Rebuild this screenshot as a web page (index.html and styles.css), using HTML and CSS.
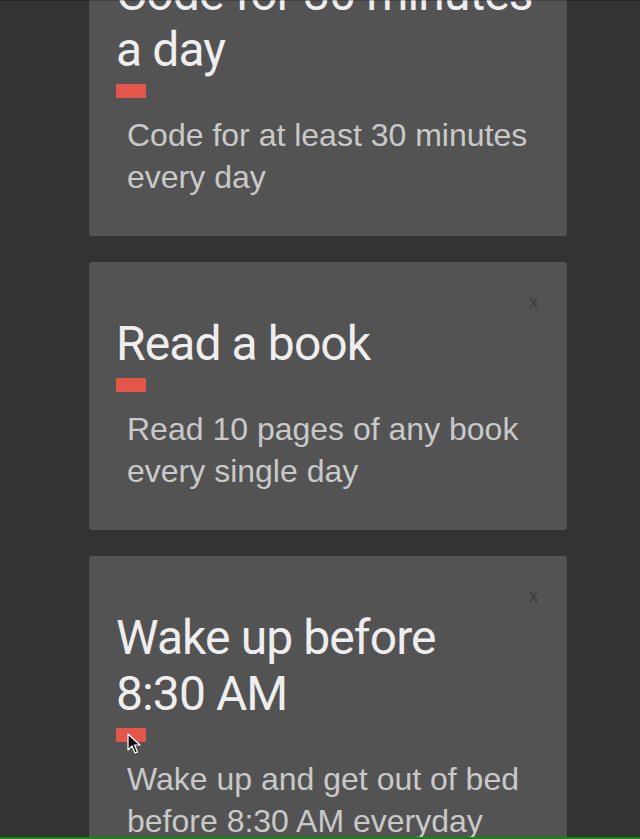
FILE: index.html
```html
<!DOCTYPE html>
<html lang="en">
<head>
<meta charset="utf-8">
<title>Habits</title>
<link rel="stylesheet" href="styles.css">
</head>
<body>
<main class="list">
  <article class="card">
    <button class="close">x</button>
    <h2 class="title">Code for 30 minutes a day</h2>
    <div class="bar"></div>
    <p class="desc">Code for at least 30 minutes every day</p>
  </article>
  <article class="card">
    <button class="close">x</button>
    <h2 class="title">Read a book</h2>
    <div class="bar"></div>
    <p class="desc">Read 10 pages of any book every single day</p>
  </article>
  <article class="card">
    <button class="close">x</button>
    <h2 class="title">Wake up before <span class="nowrap">8:30 AM</span></h2>
    <div class="bar"></div>
    <p class="desc">Wake up and get out of bed before 8:30 AM everyday</p>
    <svg class="cursor" width="14" height="22" viewBox="0 0 14 22"><path d="M1 1 L1 17 L5 13 L8 20 L10.5 19 L7.5 12 L13 12 Z" fill="#111" stroke="#fff" stroke-width="1.2" stroke-linejoin="round"/></svg>
  </article>
</main>
<div class="topline"></div>
<div class="bottomline"></div>
</body>
</html>
```
FILE: styles.css
```css
html, body {
  margin: 0;
  padding: 0;
  background: #333333;
}
.list {
  margin: -88px 0 0 89px;
  width: 478px;
  display: flex;
  flex-direction: column;
  gap: 26px;
}
.card {
  position: relative;
  background: #545354;
  border-radius: 3px;
  padding: 54px 16px 38px 27px;
}
.close {
  position: absolute;
  top: 31px;
  right: 29px;
  margin: 0;
  padding: 0;
  border: 0;
  background: none;
  font-family: "Liberation Sans", Arial, sans-serif;
  font-size: 18px;
  line-height: 18px;
  color: #3c3c3c;
}
.title {
  margin: 0;
  font-family: Roboto, "Noto Sans", sans-serif;
  font-weight: 400;
  font-size: 48px;
  line-height: 56px;
  letter-spacing: -0.9px;
  color: #eeeeee;
}
.nowrap {
  white-space: nowrap;
}
.bar {
  margin-top: 6px;
  width: 30px;
  height: 14px;
  background: #e5564a;
  border-radius: 1px;
}
.desc {
  margin: 16px 0 0 11px;
  font-family: "Liberation Sans", Arial, sans-serif;
  font-size: 32px;
  line-height: 42px;
  color: #c9c9c9;
}
.cursor {
  position: absolute;
  left: 38px;
  top: 177px;
}
.topline {
  position: fixed;
  top: 0;
  left: 0;
  right: 0;
  height: 1px;
  background: rgba(0, 0, 0, 0.2);
}
.bottomline {
  position: fixed;
  bottom: 0;
  left: 0;
  right: 0;
  height: 2px;
  background: #128a12;
}
```
